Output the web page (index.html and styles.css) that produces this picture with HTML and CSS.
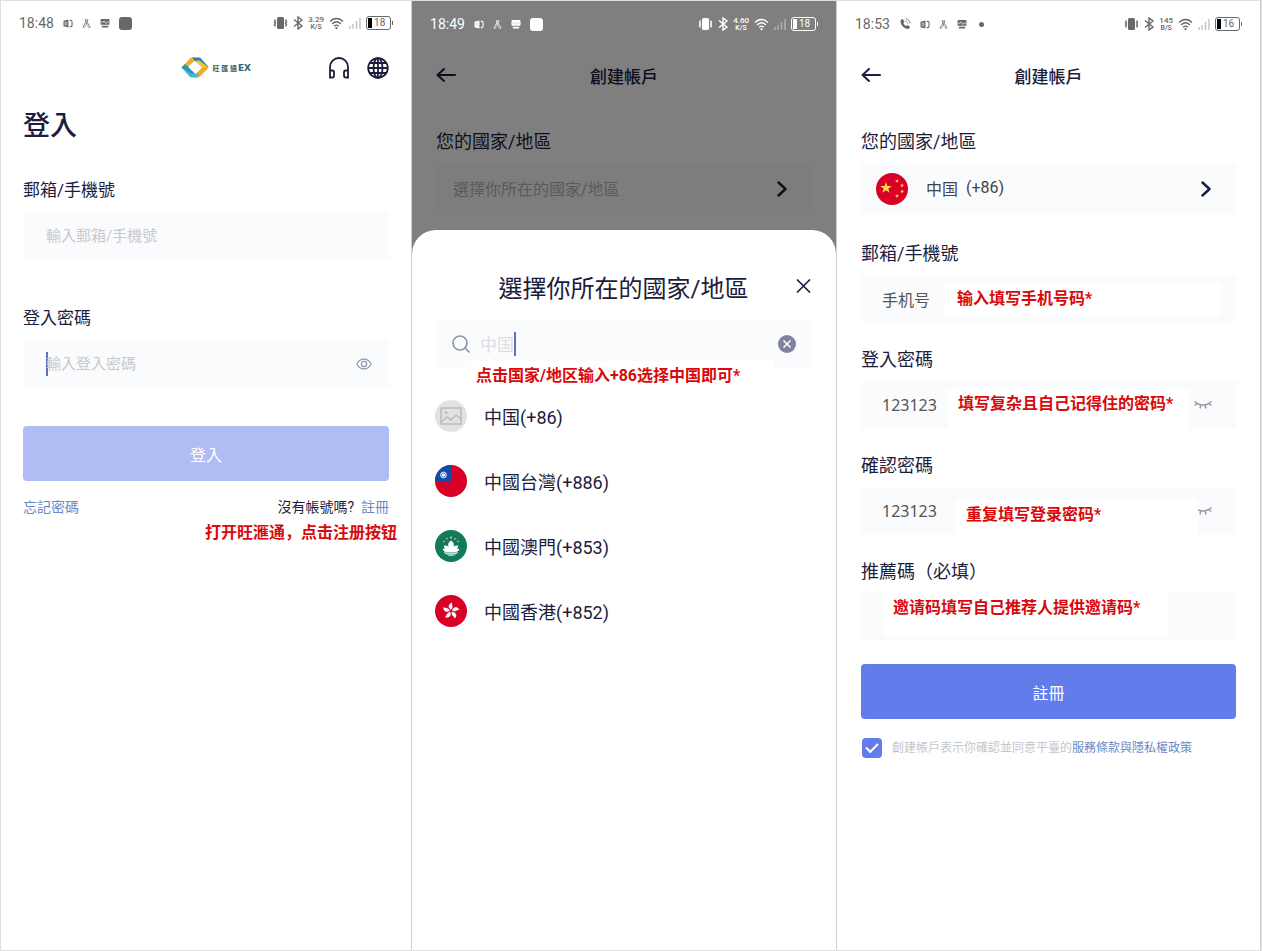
FILE: index.html
```html
<!DOCTYPE html>
<html lang="zh-Hant">
<head>
<meta charset="utf-8">
<title>創建帳戶</title>
<link rel="stylesheet" href="styles.css">
</head>
<body>
<!-- icon sprite -->
<svg class="sprite" width="0" height="0">
  <symbol id="i-badge" viewBox="0 0 11 10"><path fill="currentColor" d="M.5 2L6 .5v9L.5 8z"/><path d="M2 3.500h2.500v3H2zM7.500 1.500h1q1.500 0 1.500 1.500v4q0 1.500-1.500 1.500h-1" fill="none" stroke="currentColor" stroke-width="1.200"/><path d="M2.200 3.500h2v3h-2z" fill="none" stroke="#ddd" stroke-width=".8"/></symbol>
  <symbol id="i-flask" viewBox="0 0 10 10"><path d="M3 1h4M4 1v3L1 9M9 9L6 4V1M1 9h2.500M6.500 9H9M5 3v3M3.500 7.500L5 6l1.500 1.500" fill="none" stroke="currentColor" stroke-width=".9"/></symbol>
  <symbol id="i-monitor" viewBox="0 0 11 10"><path fill="currentColor" d="M1.500 0h8q1 0 1 1v4.500q0 1-1 1h-8q-1 0-1-1V1q0-1 1-1zM2 7.500h7v2H2z"/><path d="M0 3.500h3.500l1-1.500 2 3 1-1.500H11" fill="none" stroke="#ddd"/></symbol>
  <symbol id="i-vibrate" viewBox="0 0 15 14"><rect x="4" y="1" width="7" height="12" rx="1.500" fill="currentColor"/><path d="M2.500 3.500l-1 2 1 1.500-1 1.500 1 2M12.500 3.500l1 2-1 1.500 1 1.500-1 2" fill="none" stroke="currentColor" stroke-width="1.400"/></symbol>
  <symbol id="i-bluetooth" viewBox="0 0 10 14"><path d="M1 3.500l8 6.500-4 3V1l4 3-8 6.500" fill="none" stroke="currentColor" stroke-width="1.400"/></symbol>
  <symbol id="i-wifi" viewBox="0 0 16 14"><path d="M1 5c4-4.500 10-4.500 14 0M3.300 7.500c3-3 6.400-3 9.400 0M5.500 10c1.600-1.600 3.400-1.600 5 0" fill="none" stroke="currentColor" stroke-width="1.500"/><circle cx="8" cy="12" r="1.200" fill="currentColor"/></symbol>
  <symbol id="i-signal" viewBox="0 0 12 12"><path d="M1 9v3M4 7v5M7.500 4v8M11 1v11" fill="none" stroke="currentColor" stroke-width="1.400"/></symbol>
  <symbol id="i-call" viewBox="0 0 13 13"><path d="M2 2l2-1 2 3-1.300 1.300c.6 1.600 1.600 2.600 3.200 3.400L9.200 7.500l2.800 2-1 2C7 13.500 0 7 2 2z" fill="currentColor"/><path d="M7 3.500c1.500.2 2.300 1 2.500 2.500M7.500 1c2.500.4 4 2 4.400 4.500" fill="none" stroke="currentColor" stroke-width=".9"/></symbol>
  <symbol id="i-back" viewBox="0 0 20 16"><path d="M8 2L1.500 8 8 14M1.500 8H19" fill="none" stroke="currentColor" stroke-width="2" stroke-linecap="round" stroke-linejoin="round"/></symbol>
  <symbol id="i-next" viewBox="0 0 10 16"><path d="M1.500 1.500L8.500 8l-7 6.500" fill="none" stroke="currentColor" stroke-width="2.400" stroke-linecap="round" stroke-linejoin="round"/></symbol>
  <symbol id="i-lash" viewBox="0 0 20 12"><path d="M1.500 2.500c4 4.500 13 4.500 17 0M4.500 4.500L1.500 6.500M7.800 5.800L7 9.500M12.200 5.800l.8 3.700M15.500 4.500l3 2" fill="none" stroke="currentColor" stroke-width="1.500"/></symbol>
</svg>

<main class="board">

  <!-- login -->
  <section class="phone phone-login">
    <div class="status">
      <div class="status-left">
        <span class="clock">18:48</span>
        <svg width="10" height="9"><use href="#i-badge"/></svg>
        <svg width="9" height="9"><use href="#i-flask"/></svg>
        <svg width="10" height="9"><use href="#i-monitor"/></svg>
        <i class="app-square"></i>
      </div>
      <div class="status-right">
        <svg width="15" height="14"><use href="#i-vibrate"/></svg>
        <svg width="10" height="14"><use href="#i-bluetooth"/></svg>
        <span class="speed">3.29<small>K/S</small></span>
        <svg width="15" height="13"><use href="#i-wifi"/></svg>
        <svg class="weak" width="12" height="12"><use href="#i-signal"/></svg>
        <span class="battery">18</span>
      </div>
    </div>
    <header class="bar bar-login">
      <div class="logo">
        <svg width="28" height="21" viewBox="0 0 28 21">
          <path d="M.5 10.500L9 1.500Q9.800.5 11 .5h4l3 3-4.500.5L7 9.500z" fill="#f0ad2c"/>
          <path d="M11 .5h7q1 0 1.800.8L27.500 10l-4.500 1.500L14 4z" fill="#2a86a8"/>
          <path d="M14 4l4.500-.5L27.500 10.500l-3.500 4-3-4z" fill="#f5c534"/>
          <path d="M27.500 10.500L19 19.500q-.8 1-2 1h-4l-2-3 3.500-.5 6.500-6.500z" fill="#f3aa25"/>
          <path d="M.5 10.500L7 9l7 7.500 4 .5-2 3.500h-5.500q-1 0-1.800-.8z" fill="#42bbd6"/>
          <path d="M.5 10.500L4 7l4 3.500 6 6-3.500.5z" fill="#2499b8"/>
          <path d="M7.500 10.500L14 4.500l6.500 6-6.500 6z" fill="#fff"/>
        </svg>
        <span class="logo-name">旺 匯 通</span><b class="logo-ex">EX</b>
      </div>
      <button class="icon-btn" type="button" aria-label="客服">
        <svg width="22" height="24" viewBox="0 0 22 24" fill="none" stroke="currentColor" stroke-width="1.800"><path d="M2 21V11a9 9 0 0 1 18 0v10M2 14.500h2.500q1.500 0 1.500 1.500v4q0 1.500-1.500 1.500H2zM20 14.500h-2.500q-1.500 0-1.500 1.500v4q0 1.500 1.500 1.500H20z"/></svg>
      </button>
      <button class="icon-btn" type="button" aria-label="語言">
        <svg width="22" height="22" viewBox="0 0 22 22" fill="none" stroke="currentColor" stroke-width="1.800"><circle cx="11" cy="11" r="9.800"/><ellipse cx="11" cy="11" rx="4.500" ry="9.800"/><path d="M11 1v20M1 11h20M3 6h16M3 16h16"/></svg>
      </button>
    </header>
    <form class="form">
      <h1 class="title">登入</h1>
      <div class="group">
        <label class="label" for="account">郵箱/手機號</label>
        <div class="field"><input id="account" type="text" placeholder="輸入郵箱/手機號"></div>
      </div>
      <div class="group">
        <label class="label" for="password">登入密碼</label>
        <div class="field">
          <i class="caret"></i>
          <input id="password" type="password" placeholder="輸入登入密碼">
          <svg class="eye" width="16" height="12" viewBox="0 0 16 12" fill="none" stroke="currentColor" stroke-width="1.200"><path d="M1 6c3-6.500 11-6.500 14 0-3 6.500-11 6.500-14 0z"/><circle cx="8" cy="6" r="2.600"/></svg>
        </div>
      </div>
      <button class="submit submit-off" type="button">登入</button>
      <div class="links">
        <a href="#">忘記密碼</a>
        <span>沒有帳號嗎?</span>
        <a href="#">註冊</a>
      </div>
      <p class="note note-login" lang="zh-Hans">打开旺滙通，点击注册按钮</p>
    </form>
  </section>

  <!-- country sheet -->
  <section class="phone phone-country">
    <div class="status status-light">
      <div class="status-left">
        <span class="clock">18:49</span>
        <svg width="10" height="9"><use href="#i-badge"/></svg>
        <svg width="9" height="9"><use href="#i-flask"/></svg>
        <svg width="10" height="9"><use href="#i-monitor"/></svg>
        <i class="app-square"></i>
      </div>
      <div class="status-right">
        <svg width="15" height="14"><use href="#i-vibrate"/></svg>
        <svg width="10" height="14"><use href="#i-bluetooth"/></svg>
        <span class="speed">4.60<small>K/S</small></span>
        <svg width="15" height="13"><use href="#i-wifi"/></svg>
        <svg class="weak" width="12" height="12"><use href="#i-signal"/></svg>
        <span class="battery">18</span>
      </div>
    </div>
    <header class="bar">
      <button class="icon-btn" type="button" aria-label="返回"><svg width="20" height="16"><use href="#i-back"/></svg></button>
      <h2 class="bar-title">創建帳戶</h2>
    </header>
    <div class="form">
      <div class="group">
        <span class="label">您的國家/地區</span>
        <button class="field picker" type="button"><span class="picker-empty">選擇你所在的國家/地區</span><svg width="10" height="16"><use href="#i-next"/></svg></button>
      </div>
    </div>
    <div class="overlay">
      <div class="sheet">
        <div class="sheet-head">
          <h2 class="sheet-title">選擇你所在的國家/地區</h2>
          <button class="icon-btn" type="button" aria-label="關閉"><svg width="16" height="14" viewBox="0 0 16 14" fill="none" stroke="currentColor" stroke-width="1.600"><path d="M1 .5l13 13M14 .5L1 13.500"/></svg></button>
        </div>
        <div class="field search">
          <svg class="lens" width="18" height="18" viewBox="0 0 18 18" fill="none" stroke="currentColor" stroke-width="1.600"><circle cx="8" cy="8" r="7"/><path d="M13 13l4 4" stroke-linecap="round"/></svg>
          <input type="text" aria-label="搜尋" value="中国">
          <i class="caret"></i>
          <button class="icon-btn clear" type="button" aria-label="清除"><svg width="18" height="18" viewBox="0 0 18 18"><circle cx="9" cy="9" r="9" fill="#80829f"/><path d="M5.500 5.500l7 7M12.500 5.500l-7 7" stroke="#fff" stroke-width="1.600"/></svg></button>
          <span class="note note-search" lang="zh-Hans">点击国家/地区输入+86选择中国即可*</span>
        </div>
        <ul class="countries">
          <li>
            <svg width="32" height="32" viewBox="0 0 32 32"><circle cx="16" cy="16" r="16" fill="#e2e2e2"/><g fill="none" stroke="#bdbdbd" stroke-width="1.600"><rect x="6" y="8" width="20" height="16"/><path d="M6 22l6-5 4 3 5-5 5 4"/></g><circle cx="11" cy="12.500" r="1.500" fill="#bdbdbd"/></svg>
            中国(+86)
          </li>
          <li>
            <svg width="32" height="32" viewBox="0 0 32 32"><circle cx="16" cy="16" r="16" fill="#d80027"/><path d="M0 17A16 16 0 0 1 16 0v17z" fill="#0f4da8"/><circle cx="8.500" cy="10" r="2.900" fill="#fff" stroke="#fff" stroke-dasharray="1 .6"/><circle cx="8.500" cy="10" r="2" fill="none" stroke="#0f4da8" stroke-width=".7"/></svg>
            中國台灣(+886)
          </li>
          <li>
            <svg width="32" height="32" viewBox="0 0 32 32"><circle cx="16" cy="16" r="16" fill="#147a5c"/><path d="M16 10.500c2.500 1.500 3.500 4 2.500 6 1.500-1 3-1.200 4.500-1 0 1.500-.3 2.500-1 3.500l2.500-.3c-.5 2-2 3-3.500 3.300H11c-1.500-.3-3-1.300-3.500-3.300l2.500.3c-.7-1-1-2-1-3.500 1.500-.2 3 0 4.500 1-1-2 0-4.500 2.500-6zM8.500 22.500h15l-2 1.300h-11zM11 24.500h10q-5 2.500-10 0z" fill="#fff"/><g fill="#ffda44"><circle cx="16" cy="7.500" r="1"/><circle cx="12" cy="8.800" r=".8"/><circle cx="20" cy="8.800" r=".8"/><circle cx="9" cy="11.500" r=".8"/><circle cx="23" cy="11.500" r=".8"/></g></svg>
            中國澳門(+853)
          </li>
          <li>
            <svg width="32" height="32" viewBox="0 0 32 32"><circle cx="16" cy="16" r="16" fill="#d80027"/><defs><path id="petal" d="M16 14.500c-3-2-2.500-5.500 1-6.500-.8 2 1.500 3.500-1 6.500z"/></defs><g fill="#fff" stroke="#fff" stroke-width=".6"><use href="#petal"/><use href="#petal" transform="rotate(72 16 16)"/><use href="#petal" transform="rotate(144 16 16)"/><use href="#petal" transform="rotate(216 16 16)"/><use href="#petal" transform="rotate(288 16 16)"/></g></svg>
            中國香港(+852)
          </li>
        </ul>
      </div>
    </div>
  </section>

  <!-- register -->
  <section class="phone phone-register">
    <div class="status">
      <div class="status-left">
        <span class="clock">18:53</span>
        <svg width="12" height="12"><use href="#i-call"/></svg>
        <svg width="10" height="9"><use href="#i-badge"/></svg>
        <svg width="9" height="9"><use href="#i-flask"/></svg>
        <svg width="10" height="9"><use href="#i-monitor"/></svg>
        <i class="more-dot"></i>
      </div>
      <div class="status-right">
        <svg width="15" height="14"><use href="#i-vibrate"/></svg>
        <svg width="10" height="14"><use href="#i-bluetooth"/></svg>
        <span class="speed">145<small>B/S</small></span>
        <svg width="15" height="13"><use href="#i-wifi"/></svg>
        <svg class="weak" width="12" height="12"><use href="#i-signal"/></svg>
        <span class="battery">16</span>
      </div>
    </div>
    <header class="bar">
      <button class="icon-btn" type="button" aria-label="返回"><svg width="20" height="16"><use href="#i-back"/></svg></button>
      <h2 class="bar-title">創建帳戶</h2>
    </header>
    <form class="form">
      <div class="group group-country">
        <span class="label">您的國家/地區</span>
        <button class="field picker" type="button">
          <svg width="32" height="32" viewBox="0 0 32 32"><defs><path id="star" d="M0-5l1.200 3.400h3.600L1.900.6 3 4 0 1.900-3 4-1.900.6-4.800-1.600h3.600z"/></defs><circle cx="16" cy="16" r="16" fill="#d80027"/><g fill="#ffda44"><use href="#star" transform="translate(10 15) scale(1.200)"/><use href="#star" transform="translate(21 8) rotate(20) scale(.42)"/><use href="#star" transform="translate(26 12.500) scale(.42)"/><use href="#star" transform="translate(26 18.500) rotate(20) scale(.42)"/><use href="#star" transform="translate(21 23) scale(.42)"/></g></svg>
          <span>中国</span><span>(+86)</span>
          <svg class="next" width="10" height="16"><use href="#i-next"/></svg>
        </button>
      </div>
      <div class="group">
        <label class="label" for="phone">郵箱/手機號</label>
        <div class="field"><input id="phone" type="text" value="手机号"><span class="note note-phone" lang="zh-Hans">输入填写手机号码*</span></div>
      </div>
      <div class="group">
        <label class="label" for="pass">登入密碼</label>
        <div class="field"><input id="pass" type="text" value="123123"><svg class="lash" width="20" height="12"><use href="#i-lash"/></svg><span class="note note-pass" lang="zh-Hans">填写复杂且自己记得住的密码*</span></div>
      </div>
      <div class="group">
        <label class="label" for="confirm">確認密碼</label>
        <div class="field"><input id="confirm" type="text" value="123123"><svg class="lash" width="20" height="12"><use href="#i-lash"/></svg><span class="note note-confirm" lang="zh-Hans">重复填写登录密码*</span></div>
      </div>
      <div class="group">
        <label class="label" for="invite">推薦碼（必填）</label>
        <div class="field"><input id="invite" type="text"><span class="note note-invite" lang="zh-Hans">邀请码填写自己推荐人提供邀请码*</span></div>
      </div>
      <button class="submit" type="button">註冊</button>
      <div class="agree">
        <input id="agree" type="checkbox" checked>
        <label for="agree">創建帳戶表示你確認並同意平臺的<a href="#">服務條款與隱私權政策</a></label>
      </div>
    </form>
  </section>

</main>
</body>
</html>
```

FILE: styles.css
```css
/* reset */
* {
  box-sizing: border-box;
  margin: 0;
  padding: 0;
}

body {
  background-color: #fff;
  color: #1c1c3c;
  font-family: Roboto, "Noto Sans CJK TC", sans-serif;
}

button, input {
  font-family: inherit;
  color: inherit;
  border: 0;
  background: none;
}

a {
  color: #6d87c8;
  text-decoration: none;
}

svg {
  display: block;
  flex: none;
}

.sprite {
  position: absolute;
}

/* board with the three screens */
.board {
  display: flex;
  min-height: 100vh;
  border: 1px solid #dfdfdf;
}

.phone {
  position: relative;
  min-width: 0;
  flex: 425 1 0;
  border-right: 1px solid #cfcfcf;
}

.phone-login {
  flex-grow: 411;
}

.phone-register {
  flex-grow: 424;
}

/* status bar */
.status {
  display: flex;
  justify-content: space-between;
  align-items: center;
  height: 46px;
  padding: 0 18px;
  color: #686868;
}

.status-light {
  position: relative;
  z-index: 2;
  color: #fff;
}

.phone-login .status {
  height: 44px;
}

.status-left,
.status-right {
  display: flex;
  align-items: center;
}

.status-left {
  gap: 9px;
}

.status-right {
  gap: 5px;
}

.clock {
  font-size: 14px;
}

.app-square {
  width: 13px;
  height: 13px;
  border-radius: 3px;
  background-color: currentColor;
}

.more-dot {
  width: 5px;
  height: 5px;
  margin-left: 3px;
  border-radius: 50%;
  background-color: currentColor;
}

.speed {
  font-size: 8px;
  line-height: 8px;
  font-weight: 500;
  text-align: center;
}

.speed small {
  display: block;
  font-size: 7px;
  line-height: 6px;
}

.weak {
  opacity: .4;
}

.battery {
  position: relative;
  width: 25px;
  height: 14px;
  margin-right: 2px;
  padding-left: 7px;
  border: 1px solid currentColor;
  border-radius: 3px;
  font-size: 10px;
  line-height: 12px;
}

.battery::before,
.battery::after {
  content: '';
  position: absolute;
  background-color: currentColor;
}

.battery::before {
  left: 1px;
  top: 1px;
  width: 4px;
  height: 10px;
}

.status:not(.status-light) .battery::before {
  background-color: #000;
}

.battery::after {
  right: -3px;
  top: 4px;
  width: 1px;
  height: 4px;
}

/* title bar */
.bar {
  display: flex;
  align-items: center;
  height: 56px;
  padding: 0 24px;
}

.bar-title {
  flex: 1;
  padding-right: 20px;
  text-align: center;
  font-size: 17px;
  font-weight: 500;
}

.bar-login {
  gap: 17px;
  height: 45px;
  padding: 0 22px;
}

.icon-btn {
  display: block;
}

.logo {
  display: flex;
  align-items: center;
  margin-left: auto;
  margin-right: 60px;
  color: #33636b;
}

.logo-name {
  margin-left: 3px;
  font-size: 7px;
  font-weight: bold;
}

.logo-ex {
  margin-left: 1px;
  font-family: "DejaVu Sans", sans-serif;
  font-size: 9px;
}

/* form */
.form {
  padding: 26px 24px 0;
}

.phone-login .form {
  padding: 16px 22px 0;
}

.title {
  margin-bottom: 32px;
  font-size: 27px;
  font-weight: 500;
  line-height: 40px;
}

.group {
  margin-bottom: 25px;
}

.phone-login .group {
  margin-bottom: 47px;
}

.group-country {
  margin-bottom: 27px;
}

.label {
  display: block;
  margin-bottom: 9px;
  font-size: 18px;
  line-height: 25px;
}

.group .label {
  height: 25px;
}

.phone-login .label {
  font-size: 17px;
}

.field {
  position: relative;
  display: flex;
  align-items: center;
  width: 100%;
  height: 47px;
  padding: 0 23px 0 21px;
  background-color: #fafbfd;
}

.field input {
  flex: 1;
  min-width: 0;
  color: #555;
  font-family: "Noto Sans", "Noto Sans CJK SC", sans-serif;
  font-size: 16px;
  outline: 0;
}

.phone-login .field {
  padding: 0 17px 0 23px;
}

.phone-login .field input {
  font-family: inherit;
  font-size: 15px;
}

.field input::placeholder {
  color: #c8c9cd;
}

.caret {
  width: 2px;
  height: 24px;
  background-color: #5f70c0;
}

.phone-login .caret {
  margin-right: -2px;
}

.eye {
  color: #9295b0;
}

.lash {
  color: #9a9cab;
}

.picker {
  height: 51px;
  padding: 0 25px 0 15px;
  color: #1c1c3c;
  font-size: 16px;
}

.phone-country .picker {
  justify-content: space-between;
  padding-left: 17px;
}

.picker-empty {
  color: #b4b4b8;
}

.picker span {
  margin-bottom: 2px;
}

.phone-register .picker span {
  margin-left: 8px;
  color: #444;
}

.phone-register .picker svg + span {
  margin-left: 18px;
}

.picker .next {
  margin-left: auto;
}

.submit {
  display: block;
  width: 100%;
  height: 55px;
  border-radius: 4px;
  background-color: #627deb;
  color: #fff;
  font-size: 16px;
}

.form .group + .submit {
  margin-top: -1px;
}

.phone-login .group + .submit {
  margin-top: -8px;
}

.submit-off {
  background-color: #b0bcf4;
}

.links {
  display: flex;
  gap: 7px;
  margin-top: 16px;
  font-size: 14px;
  line-height: 20px;
}

.links span {
  margin-left: auto;
}

.agree {
  display: flex;
  align-items: center;
  gap: 10px;
  margin-top: 19px;
  padding-left: 1px;
  color: #c4c5cc;
  font-size: 12px;
  line-height: 20px;
}

.agree input {
  flex: none;
  appearance: none;
  display: flex;
  align-items: center;
  justify-content: center;
  width: 20px;
  height: 20px;
  border-radius: 4px;
  background-color: #627deb;
}

.agree input:checked::after {
  content: '';
  width: 10px;
  height: 5px;
  margin-bottom: 3px;
  border: solid #fff;
  border-width: 0 0 2px 2px;
  transform: rotate(-45deg);
}

/* red hints */
.note {
  color: #d9090b;
  font-family: Roboto, "Noto Sans CJK SC", sans-serif;
  font-size: 16px;
  font-weight: bold;
  line-height: 24px;
  white-space: nowrap;
}

.note-login {
  margin: 4px -8px 0 0;
  text-align: right;
}

.field .note {
  position: absolute;
  background-color: #fff;
}

.note-search {
  top: 41px;
  left: 30px;
  padding: 3px 34px 0 11px;
}

.note-phone {
  top: 8px;
  left: 84px;
  right: 15px;
  padding: 4px 12px 5px;
}

.note-pass {
  top: 8px;
  left: 87px;
  bottom: 0;
  padding: 3px 16px 0 10px;
}

.note-confirm {
  top: 12px;
  left: 95px;
  right: 38px;
  bottom: 0;
  padding: 4px 10px 0;
}

.note-invite {
  top: 0;
  left: 22px;
  bottom: 4px;
  padding: 3px 28px 0 10px;
}

/* bottom sheet */
.overlay {
  position: absolute;
  top: 0;
  right: 0;
  bottom: 0;
  left: 0;
  display: flex;
  padding-top: 229px;
  background-color: rgba(0, 0, 0, .5);
}

.sheet {
  flex: 1;
  padding: 39px 24px 0 23px;
  border-radius: 24px 24px 0 0;
  background-color: #fff;
}

.sheet-head {
  display: flex;
  align-items: center;
  height: 34px;
  margin-bottom: 17px;
}

.sheet-title {
  flex: 1;
  padding-left: 16px;
  text-align: center;
  font-size: 24px;
  font-weight: 400;
}

.search {
  padding: 0 16px 0 17px;
}

.lens {
  margin-right: 10px;
  color: #9092a8;
}

.search input {
  flex: none;
  width: 34px;
  color: #dcdde2;
  font-size: 17px;
}

.clear {
  margin-left: auto;
}

.countries {
  padding-top: 33px;
  list-style: none;
}

.countries li {
  display: flex;
  align-items: center;
  gap: 17px;
  height: 32px;
  margin-bottom: 33px;
  font-size: 18px;
}
```
